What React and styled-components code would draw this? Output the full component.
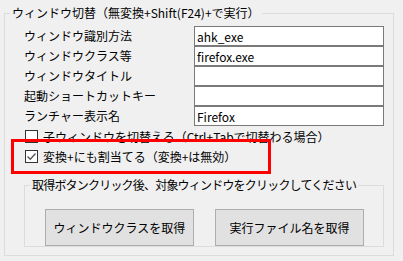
import styled, { createGlobalStyle } from 'styled-components';

const GlobalStyle = createGlobalStyle`
  html, body {
    margin: 0;
    padding: 0;
    background: #f0f0f0;
  }
  body {
    font-family: "Noto Sans CJK JP", "Noto Sans", sans-serif;
    font-size: 12px;
    color: #000;
  }
`;

const fields = [
  { label: 'ウィンドウ識別方法', value: 'ahk_exe' },
  { label: 'ウィンドウクラス等', value: 'firefox.exe' },
  { label: 'ウィンドウタイトル', value: '' },
  { label: '起動ショートカットキー', value: '' },
  { label: 'ランチャー表示名', value: 'Firefox' },
];

function App () {
  return (
    <Page>
      <GlobalStyle />
      <Group $width={390} $top={5} $left={4}>
        <Title>ウィンドウ切替（無変換+Shift(F24)+で実行）</Title>
        <GroupBody>
          <FormGrid>
            {fields.map((f) => (
              <FormRow key={f.label}>
                <Label>{f.label}</Label>
                <TextBox defaultValue={f.value} readOnly />
              </FormRow>
            ))}
          </FormGrid>
          <CheckRow>
            <CheckBox />
            <span>子ウィンドウを切替える（Ctrl+Tabで切替わる場合）</span>
          </CheckRow>
          <CheckRow>
            <CheckBox $checked>
              <svg width='11' height='11' viewBox='0 0 11 11'>
                <path d='M1.5 5.5 L4.3 8.3 L9.5 2.5' fill='none' stroke='#555' strokeWidth='1.3' />
              </svg>
            </CheckBox>
            <span>変換+にも割当てる（変換+は無効）</span>
          </CheckRow>
          <Group $width={360} $top={11} $left={0}>
            <Title $spacing={-0.8}>取得ボタンクリック後、対象ウィンドウをクリックしてください</Title>
            <ButtonBar>
              <Button>ウィンドウクラスを取得</Button>
              <Button>実行ファイル名を取得</Button>
            </ButtonBar>
          </Group>
        </GroupBody>
      </Group>
      <Highlight />
    </Page>
  );
}

export default App;

const Page = styled.div`
  position: relative;
  width: 403px;
  height: 261px;
  overflow: hidden;
`;

const Group = styled.fieldset`
  box-sizing: border-box;
  width: ${(p) => p.$width}px;
  margin: ${(p) => p.$top}px 0 0 ${(p) => p.$left}px;
  padding: 0;
  border: 1px solid #dcdcdc;
  min-width: 0;
`;

const Title = styled.legend`
  margin-left: 5px;
  padding: 0 2px;
  line-height: 16px;
  height: 16px;
  white-space: nowrap;
  letter-spacing: ${(p) => p.$spacing || 0}px;
`;

const GroupBody = styled.div`
  padding: 5px 9px 8px 19px;
`;

const FormGrid = styled.div`
  display: grid;
  grid-auto-rows: 20px;
`;

const FormRow = styled.div`
  display: grid;
  grid-template-columns: 170px 190px;
  align-items: center;
`;

const Label = styled.span`
  line-height: 20px;
  white-space: nowrap;
`;

const TextBox = styled.input`
  box-sizing: border-box;
  width: 190px;
  height: 20px;
  margin: 0;
  padding: 0 2px;
  border: 1px solid #7a7a7a;
  background: #fff;
  font-family: inherit;
  font-size: 12px;
  color: #000;
  outline: none;
`;

const CheckRow = styled.div`
  display: flex;
  align-items: center;
  gap: 5px;
  height: 20px;
  padding-left: 1px;
  white-space: nowrap;
`;

const CheckBox = styled.span`
  box-sizing: border-box;
  display: flex;
  align-items: center;
  justify-content: center;
  width: 13px;
  height: 13px;
  border: 1px solid #333;
  background: #fff;
  flex: none;
`;

const ButtonBar = styled.div`
  display: flex;
  gap: 21px;
  padding: 16px 0 0 20px;
`;

const Button = styled.button`
  box-sizing: border-box;
  width: 149px;
  height: 37px;
  margin: 0;
  padding: 0;
  background: #e1e1e1;
  border: 1px solid #adadad;
  font-family: inherit;
  font-size: 12px;
  color: #000;
`;

const Highlight = styled.div`
  position: absolute;
  left: 11px;
  top: 139px;
  width: 260px;
  height: 35px;
  box-sizing: border-box;
  border: 3px solid #ff0000;
  pointer-events: none;
`;
